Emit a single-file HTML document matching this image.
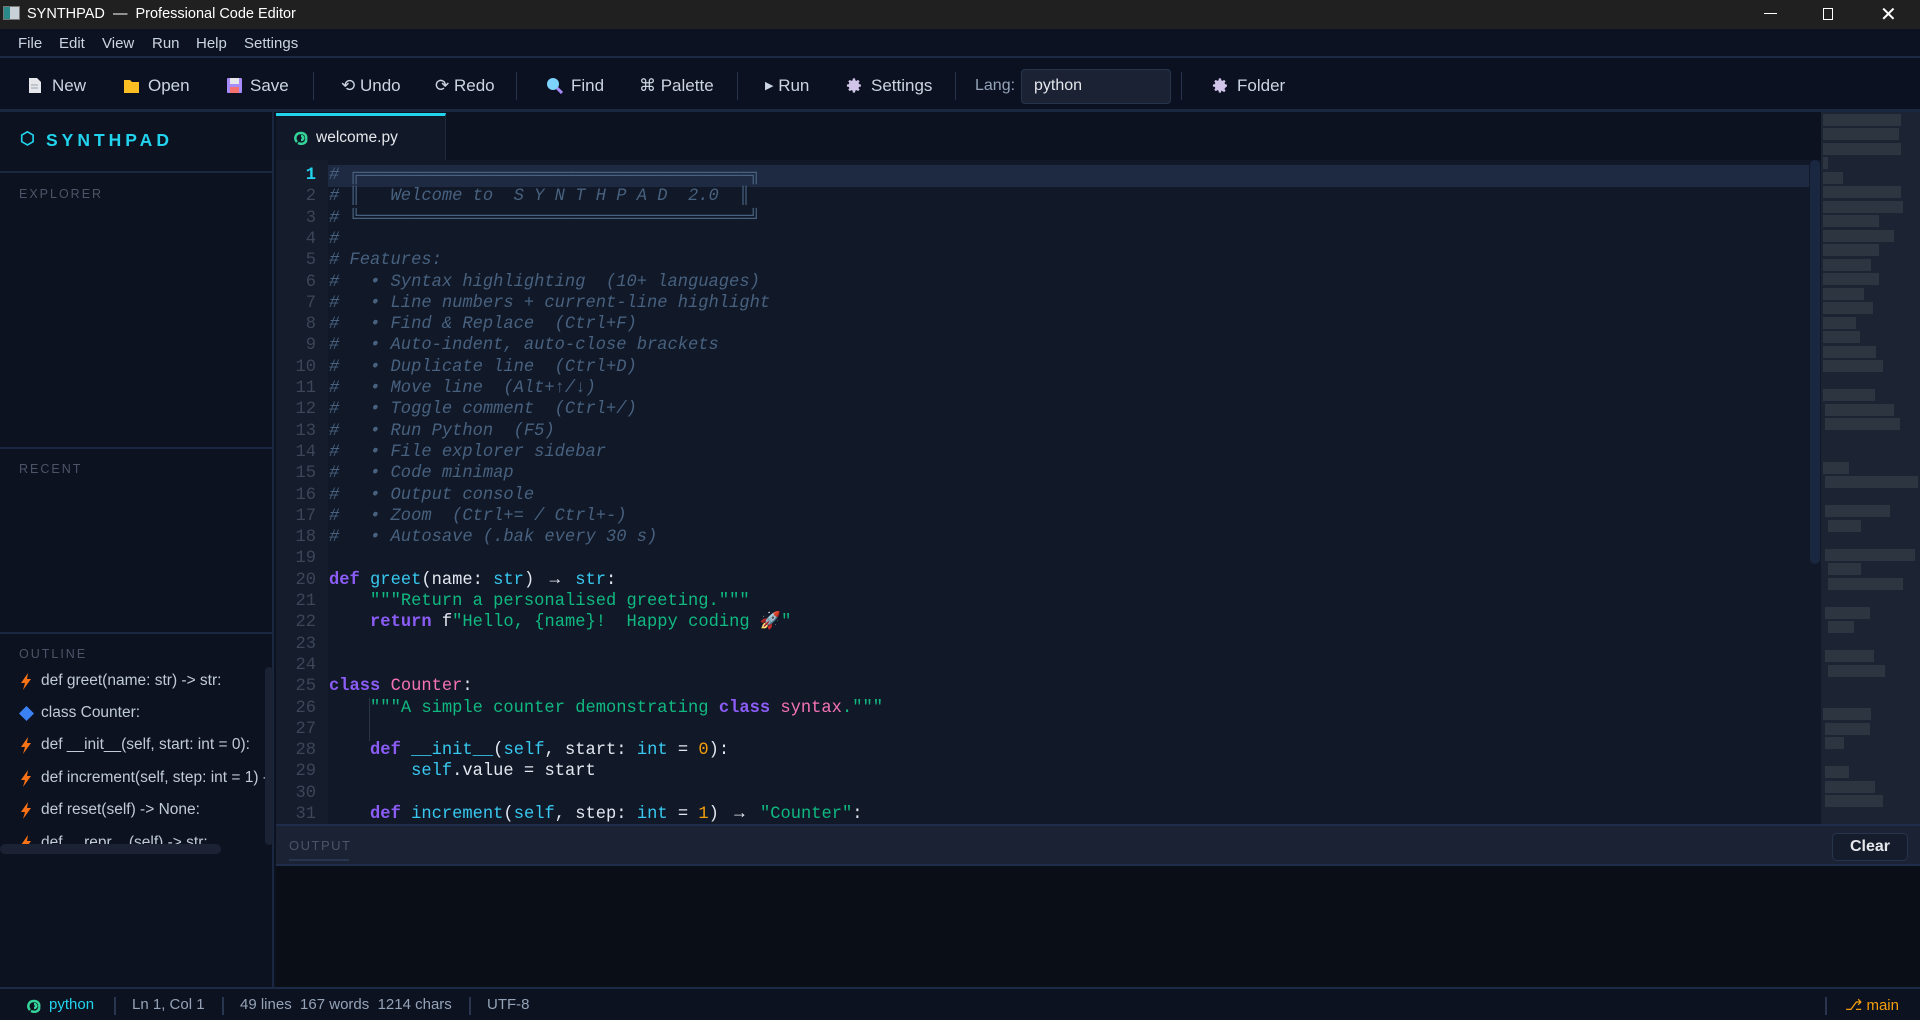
<!DOCTYPE html>
<html><head><meta charset="utf-8"><style>
*{margin:0;padding:0;box-sizing:border-box}
body{width:1920px;height:1020px;overflow:hidden;background:#0c1220;font-family:"Liberation Sans",sans-serif;position:relative;color:#cbd5e1}
.a{position:absolute;white-space:nowrap}
#title{left:0;top:0;width:1920px;height:29px;background:#202020;color:#fff;font-size:14.5px}
#menu{left:0;top:29px;width:1920px;height:29px;background:#0c1221;border-bottom:2px solid #1c2a45;font-size:15px;color:#cbd5e1}
#tool{left:0;top:58px;width:1920px;height:54px;background:#0b1120;border-bottom:3px solid #1a2740;font-size:17px;color:#cbd5e1}
.sep{position:absolute;top:14px;width:1px;height:28px;background:#26344d}
#side{left:0;top:112px;width:274px;height:876px;background:#0c1220;border-right:2px solid #1a2740}
.hd{font-size:12.5px;letter-spacing:2px;color:#4b5567}
.hr{position:absolute;left:0;width:272px;height:2px;background:#1a2740}
.ol{font-size:15.5px;color:#c0cad8}
#tabs{left:276px;top:112px;width:1644px;height:48px;background:#0d1220}
#gut{left:276px;top:160px;width:52px;height:664px;background:#151c2b}
#code{left:328px;top:160px;width:1493px;height:664px;background:#111827;overflow:hidden}
.ln{position:absolute;right:0;width:52px;text-align:right;padding-right:12px;font-family:"Liberation Mono",monospace;font-size:17.1px;color:#3b4658;line-height:21.3px}
.cl{position:absolute;left:1px;font-family:"Liberation Mono",monospace;font-size:17.1px;line-height:21.3px;color:#e2e8f0;white-space:pre}
.c{color:#47617f;font-style:italic}
.k{color:#8b5cf6;font-weight:bold}
.f{color:#38c8f0}
.s{color:#10b981}
.p{color:#f472b6}
.n{color:#f59e0b}
.ar{display:inline-block;width:2ch;text-align:center}
.ig{position:absolute;width:1px;background:#2a3548}
#mini{left:1821px;top:112px;width:99px;height:712px;background:#1c2333}
.mb{position:absolute;height:12px;background:#2d3640}
#outh{left:276px;top:824px;width:1644px;height:42px;background:#1a2234;border-top:2px solid #1f2d4a;border-bottom:2px solid #1f2d4a}
#outb{left:276px;top:866px;width:1644px;height:121px;background:#0a0e17}
#status{left:0;top:987px;width:1920px;height:33px;background:#0d1220;border-top:2px solid #1c2a45;font-size:15px;color:#94a3b8}
.ss{position:absolute;top:8px;width:2px;height:18px;background:#2a3650}
</style></head><body>
<div id="title" class="a">
 <div class="a" style="left:3px;top:6px;width:17px;height:14px;background:#c8d0d8;border:1px solid #777"><div style="width:6px;height:12px;background:#2a8a8a"></div></div>
 <div class="a" style="left:27px;top:6px">SYNTHPAD &nbsp;— &nbsp;Professional Code Editor</div>
 <div class="a" style="left:1764px;top:13px;width:13px;height:1px;background:#fff"></div>
 <div class="a" style="left:1823px;top:8px;width:10px;height:12px;border:1px solid #fff"></div>
 <div class="a" style="left:1880px;top:2px;font-size:20px">✕</div>
</div>
<div id="menu" class="a">
 <span class="a" style="left:18px;top:6px">File</span><span class="a" style="left:59px;top:6px">Edit</span><span class="a" style="left:102px;top:6px">View</span><span class="a" style="left:152px;top:6px">Run</span><span class="a" style="left:196px;top:6px">Help</span><span class="a" style="left:244px;top:6px">Settings</span>
</div>
<div id="tool" class="a">
 <svg class="a" style="left:28px;top:19px" width="14" height="17"><path d="M1 1h8l4 4v11H1z" fill="#e5e7eb"/><path d="M3 8h7M3 11h7" stroke="#9ca3af"/></svg>
 <span class="a" style="left:52px;top:18px">New</span>
 <svg class="a" style="left:123px;top:19px" width="17" height="17"><path d="M1 3h6l2 2h7v11H1z" fill="#fbbf24"/></svg>
 <span class="a" style="left:148px;top:18px">Open</span>
 <svg class="a" style="left:226px;top:19px" width="17" height="17"><rect x="1" y="1" width="15" height="15" rx="1" fill="#a78bfa"/><rect x="4" y="1" width="9" height="6" fill="#e5e7eb"/><rect x="4" y="10" width="9" height="6" fill="#f87171"/></svg>
 <span class="a" style="left:250px;top:18px">Save</span>
 <div class="sep" style="left:313px"></div>
 <span class="a" style="left:341px;top:18px">⟲ Undo</span>
 <span class="a" style="left:435px;top:18px">⟳ Redo</span>
 <div class="sep" style="left:516px"></div>
 <svg class="a" style="left:546px;top:19px" width="17" height="17"><circle cx="7" cy="7" r="6" fill="#7dd3fc"/><path d="M11 11l5 5" stroke="#a78bfa" stroke-width="3"/></svg>
 <span class="a" style="left:571px;top:18px">Find</span>
 <span class="a" style="left:639px;top:18px">⌘ Palette</span>
 <div class="sep" style="left:737px"></div>
 <span class="a" style="left:765px;top:18px"><span style="font-size:11px;position:relative;top:-2px">▶</span> Run</span>
 <svg class="a" style="left:846px;top:19px" width="17" height="17" viewBox="0 0 24 24"><path fill="#d1c4e9" d="M12 8a4 4 0 1 0 0 8 4 4 0 0 0 0-8zm9 5.5v-3l-2.6-.5-.7-1.7 1.5-2.2-2.1-2.1-2.2 1.5-1.7-.7L12.7 2h-3l-.5 2.8-1.7.7-2.2-1.5-2.1 2.1 1.5 2.2-.7 1.7L1.3 10.5v3l2.7.5.7 1.7-1.5 2.2 2.1 2.1 2.2-1.5 1.7.7.5 2.8h3l.5-2.8 1.7-.7 2.2 1.5 2.1-2.1-1.5-2.2.7-1.7z"/></svg>
 <span class="a" style="left:871px;top:18px">Settings</span>
 <div class="sep" style="left:955px"></div>
 <span class="a" style="left:975px;top:19px;font-size:16px;color:#94a3b8">Lang:</span>
 <div class="a" style="left:1021px;top:11px;width:150px;height:35px;background:#1a2234;border:1px solid #26344d;border-radius:4px;font-size:16px;color:#e5e7eb;padding:7px 12px">python</div>
 <div class="sep" style="left:1181px"></div>
 <svg class="a" style="left:1212px;top:19px" width="17" height="17" viewBox="0 0 24 24"><path fill="#d1c4e9" d="M12 8a4 4 0 1 0 0 8 4 4 0 0 0 0-8zm9 5.5v-3l-2.6-.5-.7-1.7 1.5-2.2-2.1-2.1-2.2 1.5-1.7-.7L12.7 2h-3l-.5 2.8-1.7.7-2.2-1.5-2.1 2.1 1.5 2.2-.7 1.7L1.3 10.5v3l2.7.5.7 1.7-1.5 2.2 2.1 2.1 2.2-1.5 1.7.7.5 2.8h3l.5-2.8 1.7.7 2.2 1.5 2.1-2.1-1.5-2.2.7-1.7z"/></svg>
 <span class="a" style="left:1237px;top:18px">Folder</span>
</div>
<div id="side" class="a">
 <div class="a" style="left:20px;top:17px;font-size:17px;color:#22d3ee;font-weight:bold">⬡</div>
 <div class="a" style="left:46px;top:18px;font-size:17.5px;color:#22d3ee;font-weight:bold;letter-spacing:4px">SYNTHPAD</div>
 <div class="hr" style="top:59px"></div>
 <div class="a hd" style="left:19px;top:75px">EXPLORER</div>
 <div class="hr" style="top:335px"></div>
 <div class="a hd" style="left:19px;top:350px">RECENT</div>
 <div class="hr" style="top:520px"></div>
 <div class="a hd" style="left:19px;top:535px">OUTLINE</div>
 <div class="a" style="left:0;top:556px;width:265px;height:184px;overflow:hidden">
  <svg class="a" style="left:20px;top:5px" width="12" height="17"><path d="M8 0L1 10h4l-2 7 8-11H7z" fill="#f97316"/></svg><div class="a ol" style="left:41px;top:4px">def greet(name: str) -&gt; str:</div>
  <svg class="a" style="left:19px;top:38px" width="15" height="15"><path d="M7.5 0L15 7.5 7.5 15 0 7.5z" fill="#3b82f6"/></svg><div class="a ol" style="left:41px;top:36px">class Counter:</div>
  <svg class="a" style="left:20px;top:69px" width="12" height="17"><path d="M8 0L1 10h4l-2 7 8-11H7z" fill="#f97316"/></svg><div class="a ol" style="left:41px;top:68px">def __init__(self, start: int = 0):</div>
  <svg class="a" style="left:20px;top:102px" width="12" height="17"><path d="M8 0L1 10h4l-2 7 8-11H7z" fill="#f97316"/></svg><div class="a ol" style="left:41px;top:101px">def increment(self, step: int = 1) -&gt; "Counter":</div>
  <svg class="a" style="left:20px;top:134px" width="12" height="17"><path d="M8 0L1 10h4l-2 7 8-11H7z" fill="#f97316"/></svg><div class="a ol" style="left:41px;top:133px">def reset(self) -&gt; None:</div>
  <svg class="a" style="left:20px;top:167px" width="12" height="17"><path d="M8 0L1 10h4l-2 7 8-11H7z" fill="#f97316"/></svg><div class="a ol" style="left:41px;top:166px">def __repr__(self) -&gt; str:</div>
 </div>
 <div class="a" style="left:265px;top:555px;width:8px;height:178px;background:#1a2234;border-radius:4px"></div>
 <div class="a" style="left:0;top:732px;width:221px;height:10px;background:#1a2234;border-radius:5px"></div>
</div>
<div id="tabs" class="a">
 <div class="a" style="left:0;top:1px;width:170px;height:47px;background:#111827;border-top:3px solid #22d3ee;border-right:1px solid #1f2a3d">
  <svg class="a" style="left:18px;top:14px" width="15" height="15" viewBox="0 0 15 15"><path d="M3 12c-3-3-2-9 4-9 4 0 6 3 5 6M7 6c3 0 3 4 0 4M12 9c1 4-4 6-8 4" stroke="#34d399" stroke-width="2.5" fill="none"/></svg>
  <div class="a" style="left:40px;top:13px;font-size:15.5px;color:#e5e7eb">welcome.py</div>
 </div>
</div>
<div id="gut" class="a"></div>
<div id="code" class="a">
 <div class="a" style="left:0;top:5px;width:1481px;height:22px;background:#1e2a42"></div>
 <div class="ig" style="left:41px;top:538px;height:43px"></div>
 <div class="ig" style="left:41px;top:687px;height:22px"></div>
 <div class="ig" style="left:41px;top:730px;height:43px"></div>
 <div class="ig" style="left:81px;top:751px;height:22px"></div>
 <div class="ig" style="left:41px;top:794px;height:22px"></div>
 <div class="a" style="left:1482px;top:0;width:10px;height:404px;background:#1a2740;border-radius:5px"></div>
</div>
<div class="a" style="left:276px;top:160px">
<div class="ln" style="left:0;top:5px;color:#22d3ee;font-weight:bold">1</div>
<div class="ln" style="left:0;top:26.3px">2</div><div class="ln" style="left:0;top:47.6px">3</div><div class="ln" style="left:0;top:68.9px">4</div><div class="ln" style="left:0;top:90.2px">5</div><div class="ln" style="left:0;top:111.5px">6</div><div class="ln" style="left:0;top:132.8px">7</div><div class="ln" style="left:0;top:154.1px">8</div><div class="ln" style="left:0;top:175.4px">9</div><div class="ln" style="left:0;top:196.7px">10</div><div class="ln" style="left:0;top:218px">11</div><div class="ln" style="left:0;top:239.3px">12</div><div class="ln" style="left:0;top:260.6px">13</div><div class="ln" style="left:0;top:281.9px">14</div><div class="ln" style="left:0;top:303.2px">15</div><div class="ln" style="left:0;top:324.5px">16</div><div class="ln" style="left:0;top:345.8px">17</div><div class="ln" style="left:0;top:367.1px">18</div><div class="ln" style="left:0;top:388.4px">19</div><div class="ln" style="left:0;top:409.7px">20</div><div class="ln" style="left:0;top:431px">21</div><div class="ln" style="left:0;top:452.3px">22</div><div class="ln" style="left:0;top:473.6px">23</div><div class="ln" style="left:0;top:494.9px">24</div><div class="ln" style="left:0;top:516.2px">25</div><div class="ln" style="left:0;top:537.5px">26</div><div class="ln" style="left:0;top:558.8px">27</div><div class="ln" style="left:0;top:580.1px">28</div><div class="ln" style="left:0;top:601.4px">29</div><div class="ln" style="left:0;top:622.7px">30</div><div class="ln" style="left:0;top:644px">31</div>
</div>
<div class="a" style="left:328px;top:160px;width:1480px;height:664px;overflow:hidden">
<div class="cl" style="top:5px"><span class="c"># ╔══════════════════════════════════════╗</span></div>
<div class="cl" style="top:26.3px"><span class="c"># ║   Welcome to  S Y N T H P A D  2.0  ║</span></div>
<div class="cl" style="top:47.6px"><span class="c"># ╚══════════════════════════════════════╝</span></div>
<div class="cl" style="top:68.9px"><span class="c">#</span></div>
<div class="cl" style="top:90.2px"><span class="c"># Features:</span></div>
<div class="cl" style="top:111.5px"><span class="c">#   • Syntax highlighting  (10+ languages)</span></div>
<div class="cl" style="top:132.8px"><span class="c">#   • Line numbers + current-line highlight</span></div>
<div class="cl" style="top:154.1px"><span class="c">#   • Find &amp; Replace  (Ctrl+F)</span></div>
<div class="cl" style="top:175.4px"><span class="c">#   • Auto-indent, auto-close brackets</span></div>
<div class="cl" style="top:196.7px"><span class="c">#   • Duplicate line  (Ctrl+D)</span></div>
<div class="cl" style="top:218px"><span class="c">#   • Move line  (Alt+↑/↓)</span></div>
<div class="cl" style="top:239.3px"><span class="c">#   • Toggle comment  (Ctrl+/)</span></div>
<div class="cl" style="top:260.6px"><span class="c">#   • Run Python  (F5)</span></div>
<div class="cl" style="top:281.9px"><span class="c">#   • File explorer sidebar</span></div>
<div class="cl" style="top:303.2px"><span class="c">#   • Code minimap</span></div>
<div class="cl" style="top:324.5px"><span class="c">#   • Output console</span></div>
<div class="cl" style="top:345.8px"><span class="c">#   • Zoom  (Ctrl+= / Ctrl+-)</span></div>
<div class="cl" style="top:367.1px"><span class="c">#   • Autosave (.bak every 30 s)</span></div>
<div class="cl" style="top:409.7px"><span class="k">def</span> <span class="f">greet</span>(name: <span class="f">str</span>) <span class="ar">→</span> <span class="f">str</span>:</div>
<div class="cl" style="top:431px">    <span class="s">"""Return a personalised greeting."""</span></div>
<div class="cl" style="top:452.3px">    <span class="k">return</span> f<span class="s">"Hello, {name}!  Happy coding 🚀"</span></div>
<div class="cl" style="top:516.2px"><span class="k">class</span> <span class="p">Counter</span>:</div>
<div class="cl" style="top:537.5px">    <span class="s">"""A simple counter demonstrating </span><span class="k">class</span> <span class="p">syntax</span><span class="s">."""</span></div>
<div class="cl" style="top:580.1px">    <span class="k">def</span> <span class="f">__init__</span>(<span class="f">self</span>, start: <span class="f">int</span> = <span class="n">0</span>):</div>
<div class="cl" style="top:601.4px">        <span class="f">self</span>.value = start</div>
<div class="cl" style="top:644px">    <span class="k">def</span> <span class="f">increment</span>(<span class="f">self</span>, step: <span class="f">int</span> = <span class="n">1</span>) <span class="ar">→</span> <span class="s">"Counter"</span>:</div>
</div>
<div id="mini" class="a">
<div class="mb" style="left:2px;top:2px;width:78px"></div><div class="mb" style="left:2px;top:16px;width:76px"></div><div class="mb" style="left:2px;top:31px;width:78px"></div><div class="mb" style="left:2px;top:45px;width:5px"></div><div class="mb" style="left:2px;top:60px;width:20px"></div><div class="mb" style="left:2px;top:74px;width:78px"></div><div class="mb" style="left:2px;top:89px;width:80px"></div><div class="mb" style="left:2px;top:103px;width:56px"></div><div class="mb" style="left:2px;top:118px;width:71px"></div><div class="mb" style="left:2px;top:132px;width:56px"></div><div class="mb" style="left:2px;top:147px;width:48px"></div><div class="mb" style="left:2px;top:161px;width:56px"></div><div class="mb" style="left:2px;top:176px;width:41px"></div><div class="mb" style="left:2px;top:190px;width:50px"></div><div class="mb" style="left:2px;top:205px;width:33px"></div><div class="mb" style="left:2px;top:219px;width:37px"></div><div class="mb" style="left:2px;top:234px;width:53px"></div><div class="mb" style="left:2px;top:248px;width:60px"></div>
<div class="mb" style="left:2px;top:277px;width:52px"></div><div class="mb" style="left:4px;top:292px;width:69px"></div><div class="mb" style="left:4px;top:306px;width:75px"></div>
<div class="mb" style="left:2px;top:350px;width:26px"></div><div class="mb" style="left:4px;top:364px;width:93px"></div>
<div class="mb" style="left:4px;top:393px;width:65px"></div><div class="mb" style="left:7px;top:408px;width:33px"></div>
<div class="mb" style="left:4px;top:437px;width:90px"></div><div class="mb" style="left:7px;top:451px;width:33px"></div><div class="mb" style="left:7px;top:466px;width:75px"></div>
<div class="mb" style="left:4px;top:495px;width:45px"></div><div class="mb" style="left:7px;top:509px;width:26px"></div>
<div class="mb" style="left:4px;top:538px;width:49px"></div><div class="mb" style="left:7px;top:553px;width:57px"></div>
<div class="mb" style="left:2px;top:596px;width:48px"></div><div class="mb" style="left:4px;top:611px;width:45px"></div><div class="mb" style="left:4px;top:625px;width:19px"></div>
<div class="mb" style="left:4px;top:654px;width:24px"></div><div class="mb" style="left:4px;top:669px;width:50px"></div><div class="mb" style="left:4px;top:683px;width:58px"></div>
</div>
<div id="outh" class="a">
 <div class="a" style="left:13px;top:12px;font-size:13px;letter-spacing:1.5px;color:#4b5567">OUTPUT</div>
 <div class="a" style="left:13px;top:33px;width:60px;height:2px;background:#26344d"></div>
 <div class="a" style="left:1556px;top:7px;width:76px;height:28px;border:1px solid #26344d;border-radius:5px;background:#151d2d;color:#e5e7eb;font-weight:bold;font-size:16px;text-align:center;line-height:26px">Clear</div>
</div>
<div id="outb" class="a"></div>
<div id="status" class="a">
 <svg class="a" style="left:27px;top:9px" width="15" height="15" viewBox="0 0 15 15"><path d="M3 12c-3-3-2-9 4-9 4 0 6 3 5 6M7 6c3 0 3 4 0 4M12 9c1 4-4 6-8 4" stroke="#34d399" stroke-width="2.5" fill="none"/></svg>
 <span class="a" style="left:49px;top:7px;color:#22d3ee">python</span>
 <div class="ss" style="left:114px"></div>
 <span class="a" style="left:132px;top:7px">Ln 1, Col 1</span>
 <div class="ss" style="left:222px"></div>
 <span class="a" style="left:240px;top:7px">49 lines &nbsp;167 words &nbsp;1214 chars</span>
 <div class="ss" style="left:469px"></div>
 <span class="a" style="left:487px;top:7px">UTF-8</span>
 <div class="ss" style="left:1825px"></div>
 <span class="a" style="left:1845px;top:7px;color:#f59e0b">⎇ main</span>
</div>
</body></html>
